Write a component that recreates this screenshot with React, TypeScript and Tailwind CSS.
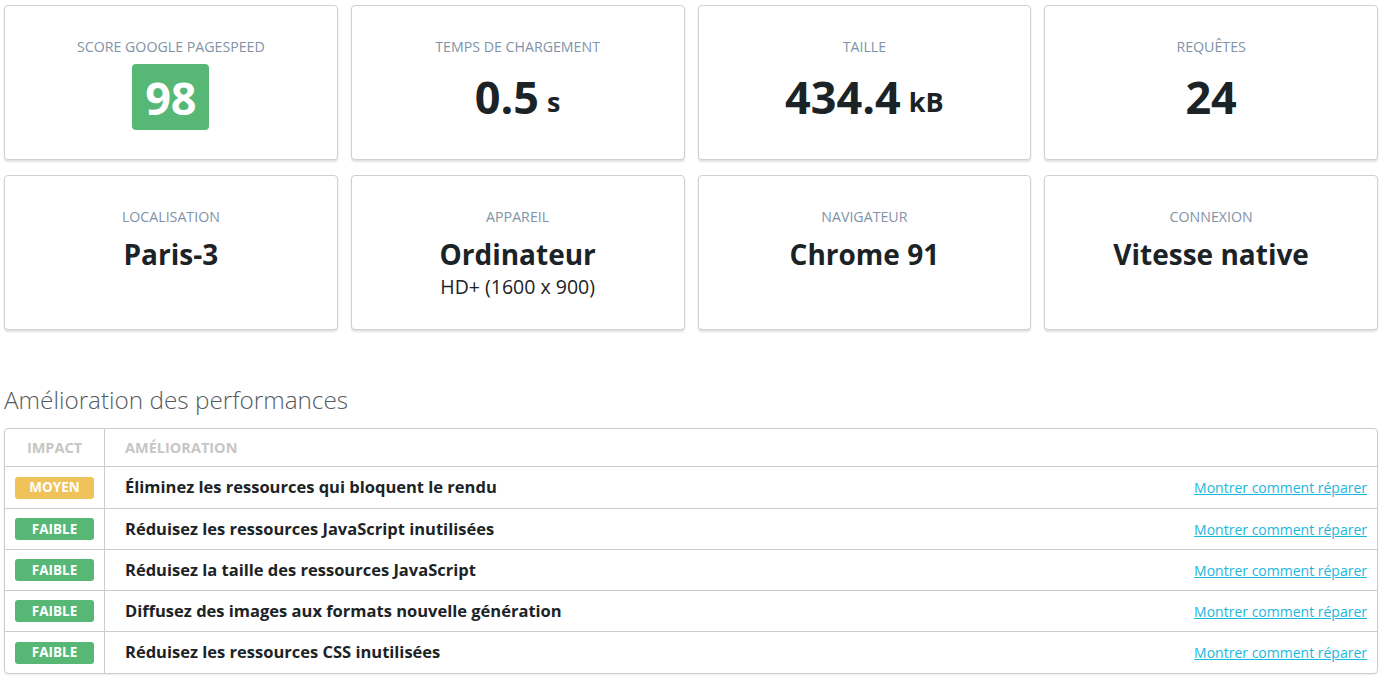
import React from "react";

const font = { fontFamily: '"Open Sans", "Noto Sans", sans-serif' };

function Card({ label, children }: { label: string; children: React.ReactNode }) {
  return (
    <div className="h-[155px] bg-white border border-[#d0d0d0] rounded-[4px] shadow-[0_2px_2px_rgba(0,0,0,0.12)] flex flex-col items-center pt-[31px]">
      <div className="h-[20px] leading-[20px] text-[14.2px] text-[#8193a8] uppercase">{label}</div>
      {children}
    </div>
  );
}

const rows = [
  { impact: "MOYEN", color: "bg-[#efc35a]", text: "Éliminez les ressources qui bloquent le rendu" },
  { impact: "FAIBLE", color: "bg-[#57b876]", text: "Réduisez les ressources JavaScript inutilisées" },
  { impact: "FAIBLE", color: "bg-[#57b876]", text: "Réduisez la taille des ressources JavaScript" },
  { impact: "FAIBLE", color: "bg-[#57b876]", text: "Diffusez des images aux formats nouvelle génération" },
  { impact: "FAIBLE", color: "bg-[#57b876]", text: "Réduisez les ressources CSS inutilisées" },
];

export default function App() {
  return (
    <div className="w-[1385px] h-[678px] bg-white overflow-hidden" style={font}>
      <div className="ml-[4px] mt-[5px] w-[1374px]">
        <div className="grid grid-cols-4 gap-x-[13px] gap-y-[15px]">
          <Card label="Score Google PageSpeed">
            <div className="mt-[7px] h-[66px] w-[77px] rounded-[4px] bg-[#57b876] flex items-center justify-center text-white font-bold text-[45px] leading-none">98</div>
          </Card>
          <Card label="Temps de chargement">
            <div className="mt-[7px] h-[66px] flex items-center justify-center text-[#1c2326] font-bold">
              <span className="text-[45px]">0.5</span>
              <span className="text-[27px] ml-[8px] mt-[10px]">s</span>
            </div>
          </Card>
          <Card label="Taille">
            <div className="mt-[7px] h-[66px] flex items-center justify-center text-[#1c2326] font-bold">
              <span className="text-[45px]">434.4</span>
              <span className="text-[27px] ml-[8px] mt-[10px]">kB</span>
            </div>
          </Card>
          <Card label="Requêtes">
            <div className="mt-[7px] h-[66px] flex items-center justify-center text-[#1c2326] font-bold">
              <span className="text-[45px]">24</span>
            </div>
          </Card>
          <Card label="Localisation">
            <div className="mt-[9px] leading-[36px] text-[28px] font-bold text-[#1c2326]">Paris-3</div>
          </Card>
          <Card label="Appareil">
            <div className="mt-[9px] leading-[36px] text-[28px] font-bold text-[#1c2326]">Ordinateur</div>
            <div className="mt-[3px] leading-[24px] text-[19.5px] text-[#1c2326]">HD+ (1600 x 900)</div>
          </Card>
          <Card label="Navigateur">
            <div className="mt-[9px] leading-[36px] text-[28px] font-bold text-[#1c2326]">Chrome 91</div>
          </Card>
          <Card label="Connexion">
            <div className="mt-[9px] leading-[36px] text-[28px] font-bold text-[#1c2326]">Vitesse native</div>
          </Card>
        </div>

        <h2 className="mt-[54px] h-[32px] leading-[32px] text-[24.3px] font-light text-[#555a5e]">Amélioration des performances</h2>

        <div className="mt-[12px] border border-[#cccccc] rounded-[4px] shadow-[0_1px_2px_rgba(0,0,0,0.08)] overflow-hidden">
          <div className="flex h-[38px] border-b border-[#cccccc]">
            <div className="w-[100px] border-r border-[#cccccc] flex items-center justify-center text-[14.5px] font-bold text-[#c6c6c6]">IMPACT</div>
            <div className="flex-1 flex items-center pl-[20px] text-[14.5px] font-bold text-[#c6c6c6]">AMÉLIORATION</div>
          </div>
          {rows.map((r, i) => (
            <div key={i} className={`flex ${i === 0 ? "h-[42px]" : "h-[41px]"} ${i < rows.length - 1 ? "border-b border-[#cccccc]" : ""}`}>
              <div className="w-[100px] border-r border-[#cccccc] flex items-center justify-center">
                <span className={`w-[79px] h-[22px] rounded-[3px] ${r.color} text-white text-[13.5px] font-bold flex items-center justify-center`}>{r.impact}</span>
              </div>
              <div className="flex-1 flex items-center pl-[20px] pr-[10px]">
                <span className="flex-1 text-[16.5px] font-bold text-[#1c2326]">{r.text}</span>
                <a href="#" className="text-[14px] text-[#1bb7dc] underline">Montrer comment réparer</a>
              </div>
            </div>
          ))}
        </div>
      </div>
    </div>
  );
}
